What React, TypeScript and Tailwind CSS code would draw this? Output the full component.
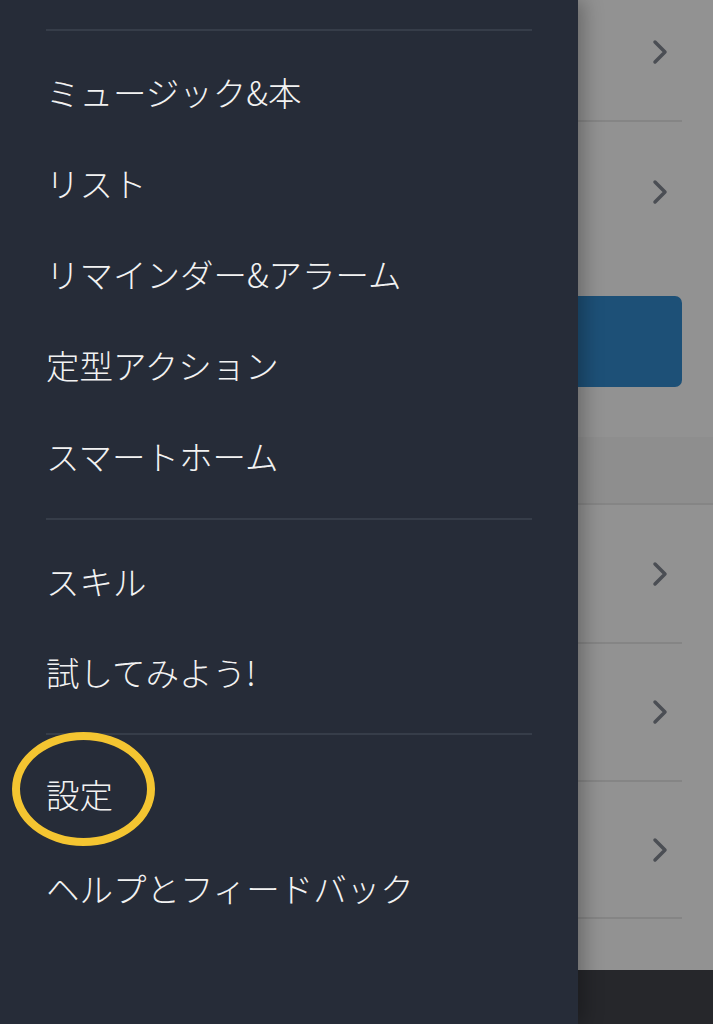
import React from "react";

const jp = { fontFamily: '"Noto Sans CJK JP", "Noto Sans", sans-serif' };

function Divider() {
  return <div className="h-[2px] bg-[#363d49]" />;
}

function MenuRow({ label, children }: { label: string; children?: React.ReactNode }) {
  return (
    <div className="relative h-[91px] flex items-center">
      {children}
      <span className="text-[33.5px] font-light leading-none text-[#f2f2f2]">{label}</span>
    </div>
  );
}

function Chevron() {
  return (
    <svg width="18" height="26" viewBox="0 0 18 26" fill="none">
      <path d="M4 3 L14 13 L4 23" stroke="#4b4e54" strokeWidth="3.5" strokeLinecap="round" strokeLinejoin="round" />
    </svg>
  );
}

function BackRow({ h, pad = "", line = true }: { h: string; pad?: string; line?: boolean }) {
  return (
    <div className={`${h} flex flex-col`}>
      <div className={`flex-1 flex items-center justify-end pr-[44px] ${pad}`}>
        <Chevron />
      </div>
      {line && <div className="h-[2px] bg-[#858585] mr-[31px]" />}
    </div>
  );
}

export default function App() {
  return (
    <div className="flex h-[1024px] w-[713px] overflow-hidden bg-[#929292]" style={jp}>
      {/* Drawer */}
      <div className="relative z-10 w-[578px] shrink-0 bg-[#262c38] px-[46px] pt-[29px] shadow-[6px_0_18px_rgba(0,0,0,0.28)]">
        <Divider />
        <div className="pt-[15px] pb-[17px]">
          <MenuRow label="ミュージック&本" />
          <MenuRow label="リスト" />
          <MenuRow label="リマインダー&アラーム" />
          <MenuRow label="定型アクション" />
          <MenuRow label="スマートホーム" />
        </div>
        <Divider />
        <div className="pt-[15px] pb-[16px]">
          <MenuRow label="スキル" />
          <MenuRow label="試してみよう!" />
        </div>
        <Divider />
        <div className="pt-[13px]">
          <MenuRow label="設定">
            <div className="absolute left-[-34px] top-[-16px] h-[114px] w-[143px] rounded-[50%] border-[8px] border-[#f4c531]" />
          </MenuRow>
          <div className="h-[3px]" />
          <MenuRow label="ヘルプとフィードバック" />
        </div>
      </div>

      {/* Dimmed background page */}
      <div className="flex-1 flex flex-col">
        <BackRow h="h-[122px]" pad="pb-[16px]" />
        <BackRow h="h-[140px]" line={false} />
        <div className="pt-[34px] pr-[31px]">
          <div className="h-[91px] rounded-r-[7px] bg-[#1d5077]" />
        </div>
        <div className="h-[50px]" />
        <div className="h-[68px] flex flex-col bg-[#8e8e8e]">
          <div className="flex-1" />
          <div className="h-[2px] bg-[#858585]" />
        </div>
        <BackRow h="h-[139px]" />
        <BackRow h="h-[138px]" />
        <BackRow h="h-[137px]" />
        <div className="h-[51px]" />
        <div className="flex-1 bg-[#26272b]" />
      </div>
    </div>
  );
}
